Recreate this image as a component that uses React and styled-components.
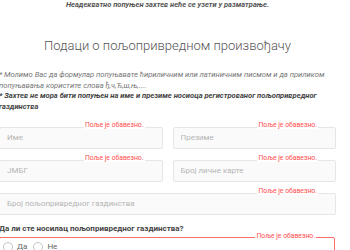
import React from "react";
import styled, { createGlobalStyle } from "styled-components";

const Global = createGlobalStyle`
  html, body { margin: 0; padding: 0; background: #fff; overflow: hidden; }
  body { font-family: Roboto, "Liberation Sans", sans-serif; }
`;

const Page = styled.div`
  width: 337px;
  margin-left: -1px;
`;

const Notice = styled.p`
  margin: 0;
  height: 9px;
  line-height: 9px;
  font-size: 7.5px;
  font-weight: 700;
  font-style: italic;
  color: #555;
  text-align: center;
`;

const Title = styled.h2`
  margin: 27px 0 0;
  height: 20px;
  line-height: 20px;
  font-size: 13px;
  font-weight: 300;
  color: #555;
  text-align: center;
`;

const Notes = styled.div`
  margin-top: 14px;
  font-size: 7.6px;
  line-height: 10.7px;
  font-style: italic;
  color: #666;
`;

const Note = styled.p`
  margin: 0;
  font-weight: ${(p) => (p.$strong ? 700 : 400)};
  color: ${(p) => (p.$strong ? "#444" : "#777")};
`;

const Grid = styled.div`
  display: grid;
  grid-template-columns: 1fr 1fr;
  column-gap: 10px;
  row-gap: 11px;
  margin-top: 14px;
`;

const Field = styled.div`
  position: relative;
  grid-column: ${(p) => (p.$wide ? "1 / span 2" : "auto")};
`;

const Input = styled.input`
  box-sizing: border-box;
  display: block;
  width: 100%;
  height: 22px;
  padding: 0 7px;
  border: 1px solid #e6e6e6;
  border-radius: 2px;
  background: #fafafa;
  font-family: Roboto, "Liberation Sans", sans-serif;
  font-size: 8px;
  color: #333;
  outline: none;
  &::placeholder { color: #b5b5b5; }
`;

const Required = styled.span`
  position: absolute;
  top: -5px;
  right: 18px;
  padding: 0 1px;
  background: #fff;
  font-size: 6.8px;
  line-height: 7px;
  color: #ff4d4d;
  white-space: nowrap;
`;

const Question = styled.p`
  margin: 9px 0 0;
  font-size: 8px;
  line-height: 10px;
  font-weight: 700;
  color: #444;
`;

const RadioBox = styled.div`
  position: relative;
  margin-top: 3px;
  margin-right: 1px;
  height: 30px;
  border: 1px solid #ff6b6b;
  border-radius: 2px;
  display: flex;
  align-items: flex-start;
  gap: 6px;
  padding: 4px 0 0 3px;
`;

const Option = styled.label`
  display: flex;
  align-items: center;
  gap: 4px;
  height: 10px;
  font-size: 8px;
  color: #666;
`;

const Circle = styled.span`
  display: inline-block;
  width: 10px;
  height: 10px;
  border: 1px solid #c4c4c4;
  border-radius: 50%;
  box-sizing: border-box;
  background: #fff;
`;

export default function App() {
  return (
    <>
      <Global />
      <Page>
        <Notice>Неадекватно попуњен захтев неће се узети у разматрање.</Notice>
        <Title>Подаци о пољопривредном произвођачу</Title>
        <Notes>
          <Note>* Молимо Вас да формулар попуњавате ћириличним или латиничним писмом и да приликом попуњавања користите слова ђ,ч,Ђ,ш,њ,....</Note>
          <Note $strong>* Захтев не мора бити попуњен на име и презиме носиоца регистрованог пољопривредног газдинства</Note>
        </Notes>
        <Grid>
          <Field>
            <Input placeholder="Име" />
            <Required>Поље је обавезно.</Required>
          </Field>
          <Field>
            <Input placeholder="Презиме" />
            <Required>Поље је обавезно.</Required>
          </Field>
          <Field>
            <Input placeholder="ЈМБГ" />
            <Required>Поље је обавезно.</Required>
          </Field>
          <Field>
            <Input placeholder="Број личне карте" />
            <Required>Поље је обавезно.</Required>
          </Field>
          <Field $wide>
            <Input placeholder="Број пољопривредног газдинства" />
            <Required>Поље је обавезно.</Required>
          </Field>
        </Grid>
        <Question>Да ли сте носилац пољопривредног газдинства?</Question>
        <RadioBox>
          <Required>Поље је обавезно.</Required>
          <Option><Circle />Да</Option>
          <Option><Circle />Не</Option>
        </RadioBox>
      </Page>
    </>
  );
}
